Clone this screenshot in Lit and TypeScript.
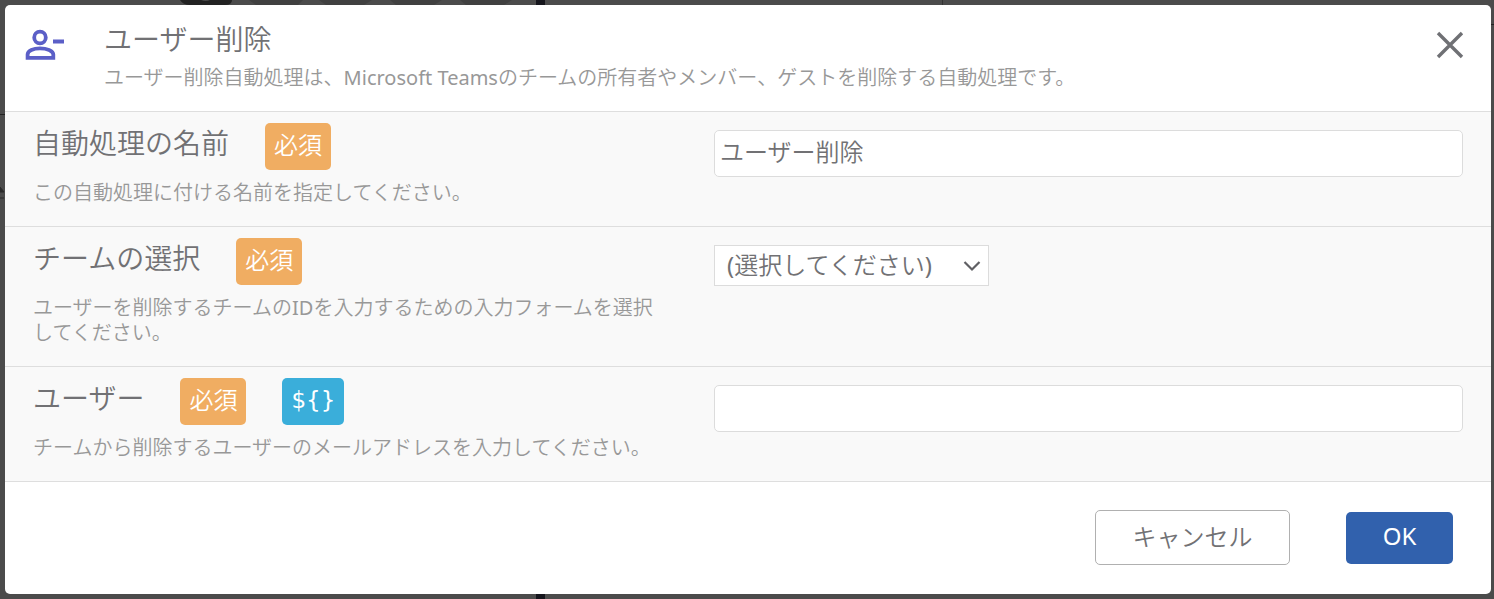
import { LitElement, html, css } from "lit";
import { customElement, property, state } from "lit/decorators.js";

const fontStack = css`"Noto Sans", "Noto Sans CJK JP DemiLight", "Noto Sans CJK JP", sans-serif`;

@customElement("tag-badge")
class TagBadge extends LitElement {
  @property({ reflect: true }) kind = "required";

  static styles = css`
    :host {
      display: block;
      box-sizing: border-box;
      height: 47px;
      padding: 5px 9px 0;
      border-radius: 5px;
      background: #f0ad62;
      color: #fff;
      font-size: 24px;
      line-height: 34px;
      white-space: nowrap;
    }
    :host([kind="variable"]) {
      background: #3aaeda;
      font-family: "DejaVu Sans", sans-serif;
      font-size: 23px;
    }
  `;

  render() {
    return html`<slot></slot>`;
  }
}

@customElement("form-row")
class FormRow extends LitElement {
  @property() label = "";
  @property() hint = "";
  @property() field = "";
  @property({ type: Boolean }) variable = false;
  @property() control = "text";
  @property() value = "";

  static styles = css`
    :host {
      display: grid;
      grid-template-columns: 681px minmax(0, 1fr);
      padding: 11px 28px 21px;
      border-bottom: 1px solid #dedede;
      background: #f9f9f9;
    }
    .heading {
      display: flex;
      gap: 36px;
    }
    .label {
      font-size: 28px;
      line-height: 40px;
      color: #717174;
    }
    .hint {
      margin: 10px 44px 0 0;
      font-size: 20px;
      line-height: 25px;
      color: #989898;
    }
    .control {
      padding-top: 7px;
    }
    input,
    select {
      box-sizing: border-box;
      margin: 0;
      border: 1px solid #dcdcdc;
      background: #fff;
      color: #717174;
      font-family: inherit;
      font-size: 24px;
      outline: none;
    }
    input {
      display: block;
      width: 100%;
      height: 47px;
      padding: 0 6px 6px 5px;
      border-radius: 5px;
    }
    .picker {
      display: inline-grid;
      align-items: center;
    }
    .picker select,
    .picker svg {
      grid-area: 1 / 1;
    }
    select {
      appearance: none;
      width: 275px;
      height: 41px;
      padding: 0 40px 2px 12px;
      border-radius: 0;
    }
    .picker svg {
      justify-self: end;
      margin-right: 8px;
      pointer-events: none;
    }
  `;

  private renderControl() {
    if (this.control === "select") {
      return html`<div class="picker">
        <select id=${this.field}>
          <option>(選択してください)</option>
        </select>
        <svg width="18" height="12" viewBox="0 0 18 12" fill="none" stroke="#606064" stroke-width="2.2" aria-hidden="true">
          <path d="M1.5 2 L9 9.5 L16.5 2" />
        </svg>
      </div>`;
    }
    return html`<input id=${this.field} type="text" .value=${this.value} />`;
  }

  render() {
    return html`
      <div>
        <div class="heading">
          <label class="label" for=${this.field}>${this.label}</label>
          <tag-badge>必須</tag-badge>
          ${this.variable ? html`<tag-badge kind="variable">\${}</tag-badge>` : null}
        </div>
        <p class="hint">${this.hint}</p>
      </div>
      <div class="control">${this.renderControl()}</div>
    `;
  }
}

@customElement("app-root")
class AppRoot extends LitElement {
  @state() private rows = [
    {
      field: "process-name",
      label: "自動処理の名前",
      hint: "この自動処理に付ける名前を指定してください。",
      control: "text",
      value: "ユーザー削除",
      variable: false,
    },
    {
      field: "team",
      label: "チームの選択",
      hint: "ユーザーを削除するチームのIDを入力するための入力フォームを選択してください。",
      control: "select",
      value: "",
      variable: false,
    },
    {
      field: "user",
      label: "ユーザー",
      hint: "チームから削除するユーザーのメールアドレスを入力してください。",
      control: "text",
      value: "",
      variable: true,
    },
  ];

  static styles = css`
    :host {
      display: block;
      position: relative;
      box-sizing: border-box;
      min-height: 100vh;
      padding: 5px 3px 5px 5px;
      overflow: hidden;
      background: #4b4b4b;
      font-family: ${fontStack};
    }
    .canvas {
      position: absolute;
      inset: 0;
      width: 100%;
      height: 100%;
    }
    .dialog {
      position: relative;
      overflow: hidden;
      border-radius: 5px;
      background: #fff;
    }
    header {
      display: flex;
      align-items: flex-start;
      padding: 14px 24px 20px 20px;
      border-bottom: 1px solid #dedede;
    }
    .user-icon {
      flex: none;
      margin-top: 10px;
    }
    .titles {
      flex: 1;
      margin-left: 38px;
    }
    h1 {
      margin: 0;
      font-size: 28px;
      font-weight: inherit;
      line-height: 40px;
      color: #717174;
    }
    .summary {
      margin: 6px 0 0;
      font-size: 20px;
      line-height: 26px;
      color: #989898;
    }
    .close {
      display: block;
      margin-top: 10px;
      padding: 0;
      border: 0;
      background: none;
      line-height: 0;
    }
    footer {
      display: flex;
      justify-content: flex-end;
      align-items: center;
      gap: 56px;
      padding: 28px 38px 29px;
    }
    .cancel,
    .ok {
      box-sizing: border-box;
      padding: 0 0 4px;
      border-radius: 5px;
      font-family: inherit;
      font-size: 24px;
    }
    .cancel {
      width: 195px;
      height: 55px;
      border: 1px solid #b0b0b0;
      background: #fff;
      color: #717174;
    }
    .ok {
      width: 107px;
      height: 52px;
      border: 0;
      background: #3161ad;
      color: #fff;
    }
  `;

  render() {
    return html`
      <svg class="canvas" aria-hidden="true">
        <path d="M180 0Q183 5 190 5H225Q232 5 232 0Z" fill="#222" />
        <path d="M201 0h9q-4 2-9 0z" fill="#4b4b4b" />
        <rect x="536" y="0" width="9" height="100%" fill="#15151c" />
        <path d="M0 114.500H6M1484 24.500H1494" stroke="#222" />
        <path d="M942.500 0V6" stroke="#333" />
        <path d="M0 187l4 5h-4zM0 198h4" stroke="#2b2b2b" fill="#2b2b2b" />
        <path d="M249 0h54l-5 5h-42zM319 0h53l-8 5h-38zM390 0h52l-8 5h-38zM460 0h52l-8 5h-38z" fill="#404040" />
      </svg>
      <main class="dialog" role="dialog" aria-labelledby="title">
        <header>
          <svg class="user-icon" width="41" height="34" viewBox="0 0 41 34" fill="none" stroke="#5b5fc7" stroke-width="3.800" aria-hidden="true">
            <circle cx="15" cy="8.500" r="5.800" />
            <path d="M2.600 28.800V25.600C2.600 21.500 8.500 19.300 15 19.300S28.300 21.500 28.300 25.600V28.800Z" />
            <path d="M28 12.500H39" />
          </svg>
          <div class="titles">
            <h1 id="title">ユーザー削除</h1>
            <p class="summary">
              ユーザー削除自動処理は、Microsoft Teamsのチームの所有者やメンバー、ゲストを削除する自動処理です。
            </p>
          </div>
          <button class="close" type="button" aria-label="閉じる">
            <svg width="34" height="34" viewBox="0 0 34 34" fill="none" stroke="#6f7074" stroke-width="3.400">
              <path d="M5 4L29 28M29 4L5 28" />
            </svg>
          </button>
        </header>
        ${this.rows.map(
          (row) => html`<form-row
            .field=${row.field}
            .label=${row.label}
            .hint=${row.hint}
            .control=${row.control}
            .value=${row.value}
            .variable=${row.variable}
          ></form-row>`,
        )}
        <footer>
          <button class="cancel" type="button">キャンセル</button>
          <button class="ok" type="button">OK</button>
        </footer>
      </main>
    `;
  }
}
